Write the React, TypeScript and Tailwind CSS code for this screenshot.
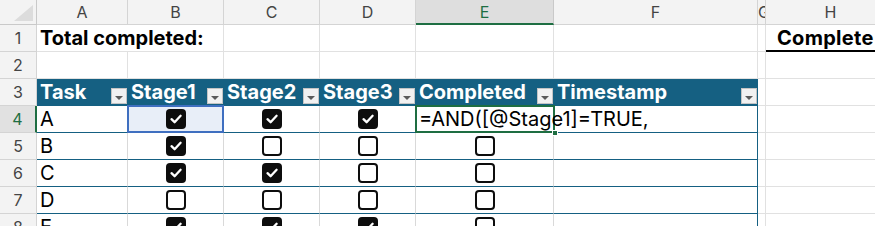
import React from "react";

const W = [
  "w-[37px]",
  "w-[91px]",
  "w-[96px]",
  "w-[96px]",
  "w-[96px]",
  "w-[138px]",
  "w-[204px]",
  "w-[8px]",
  "w-[130px]",
];

const FONT = { fontFamily: "Inter, 'Liberation Sans', sans-serif" };

function Check({ on }: { on: boolean }) {
  return on ? (
    <div className="w-[20px] h-[20px] rounded-[4px] bg-[#0d0d0d] flex items-center justify-center">
      <svg width="14" height="14" viewBox="0 0 14 14">
        <path d="M2.5 7.2 L5.6 10.2 L11.6 3.8" fill="none" stroke="#fff" strokeWidth="2.3" strokeLinecap="round" strokeLinejoin="round" />
      </svg>
    </div>
  ) : (
    <div className="w-[20px] h-[20px] rounded-[4px] border-[2.5px] border-[#0d0d0d] bg-white" />
  );
}

function FilterBtn() {
  return (
    <div className="self-end mb-[1px] w-[16px] h-[16px] shrink-0 bg-[#f1f1f1] border border-[#c4c4c4] flex items-end justify-center pb-[3px]">
      <div className="w-0 h-0 border-l-[4px] border-r-[4px] border-t-[4px] border-l-transparent border-r-transparent border-t-[#5a5a5a]" />
    </div>
  );
}

function ColHeader() {
  const letters = ["A", "B", "C", "D", "E", "F", "G", "H"];
  return (
    <div className="flex h-[25px]">
      <div className={`${W[0]} h-[25px] shrink-0 bg-[#f3f3f3] border-r border-b border-[#c9c9c9] relative`}>
        <svg className="absolute left-[14px] top-[5px]" width="19" height="16" viewBox="0 0 19 16">
          <polygon points="19,0 19,16 0,16" fill="#dcdcdc" />
        </svg>
      </div>
      {letters.map((l, i) => {
        const sel = l === "E";
        return (
          <div
            key={l}
            className={`${W[i + 1]} h-[25px] shrink-0 flex items-center overflow-hidden text-[16px] ${
              l === "G" ? "justify-start pl-[0px]" : "justify-center"
            } ${
              sel
                ? "bg-[#dedede] text-[#1e6e42] border-r border-r-[#c9c9c9] border-b-2 border-b-[#1e6e42]"
                : "bg-[#f3f3f3] text-[#444] border-r border-b border-[#d4d4d4]"
            }`}
          >
            {l}
          </div>
        );
      })}
    </div>
  );
}

function RowHead({ n, sel }: { n: number; sel?: boolean }) {
  return (
    <div
      className={`${W[0]} h-[27px] shrink-0 flex items-center justify-center text-[16px] ${
        sel
          ? "bg-[#e1e1e1] text-[#1e6e42] border-r-2 border-r-[#1e6e42] border-b border-b-[#d4d4d4]"
          : "bg-[#f3f3f3] text-[#444] border-r border-b border-[#d4d4d4]"
      }`}
    >
      {n}
    </div>
  );
}

function Grid({ w, children, cls = "" }: { w: string; children?: React.ReactNode; cls?: string }) {
  return (
    <div className={`${w} h-[27px] shrink-0 border-r border-b border-[#e1e1e1] ${cls}`}>{children}</div>
  );
}

const data: [string, boolean, boolean, boolean, boolean | null][] = [
  ["A", true, true, true, null],
  ["B", true, false, false, false],
  ["C", true, true, false, false],
  ["D", false, false, false, false],
  ["E", true, true, true, false],
];

export default function App() {
  return (
    <div className="w-[875px] h-[226px] overflow-hidden bg-white text-black" style={FONT}>
      <ColHeader />
      {/* Row 1 */}
      <div className="flex">
        <RowHead n={1} />
        <div className={`${W[1]} h-[27px] shrink-0 border-b border-[#e1e1e1] flex items-center pl-[3px] font-bold text-[20px] whitespace-nowrap relative z-10`}>
          Total completed:
        </div>
        <Grid w={W[2]} />
        <Grid w={W[3]} />
        <Grid w={W[4]} />
        <Grid w={W[5]} />
        <Grid w={W[6]} />
        <Grid w={W[7]} />
        <div className={`${W[8]} h-[27px] shrink-0 border-b-2 border-black flex items-center pl-[11px] font-bold text-[20px] tracking-[0.3px] whitespace-nowrap`}>
          Complete
        </div>
      </div>
      {/* Row 2 */}
      <div className="flex">
        <RowHead n={2} />
        {W.slice(1).map((w, i) => (
          <Grid key={i} w={w} />
        ))}
      </div>
      {/* Row 3 table header */}
      <div className="flex">
        <RowHead n={3} />
        {["Task", "Stage1", "Stage2", "Stage3", "Completed", "Timestamp"].map((h, i) => (
          <div
            key={h}
            className={`${W[i + 1]} h-[27px] shrink-0 bg-[#156082] border-b border-r border-[#156082] flex items-center justify-between pl-[3px] text-white font-bold text-[20px] whitespace-nowrap`}
          >
            <span>{h}</span>
            <FilterBtn />
          </div>
        ))}
        <Grid w={W[7]} />
        <Grid w={W[8]} />
      </div>
      {/* Data rows */}
      {data.map((r, ri) => {
        const rowSel = ri === 0;
        return (
          <div key={ri} className="flex">
            <RowHead n={ri + 4} sel={rowSel} />
            <div className={`${W[1]} h-[27px] shrink-0 border-b border-b-[#156082] border-r border-r-[#d9d9d9] flex items-center pl-[3px] text-[20px]`}>
              {r[0]}
            </div>
            {[r[1], r[2], r[3]].map((c, ci) => (
              <div
                key={ci}
                className={`${W[ci + 2]} h-[27px] shrink-0 border-b border-b-[#156082] border-r border-r-[#d9d9d9] flex items-center justify-center relative ${
                  rowSel && ci === 0 ? "bg-[#e8eef8]" : ""
                }`}
              >
                <Check on={c} />
                {rowSel && ci === 0 && (
                  <div className="absolute -left-[1px] -top-[1px] -right-[1px] -bottom-[1px] border-2 border-[#3f6fc0] pointer-events-none" />
                )}
              </div>
            ))}
            {rowSel ? (
              <div className={`${W[5]} h-[27px] shrink-0 border-b border-b-[#156082] flex items-center pl-[3px] text-[20px] relative z-10 whitespace-nowrap`}>
                <span className="relative z-10">=AND([@Stage1]=TRUE,</span>
                <div className="absolute -left-[1px] -top-[1px] -right-[1px] -bottom-[1px] border-2 border-[#1e6e42]" />
                <div className="absolute -right-[4px] -bottom-[4px] w-[6px] h-[6px] bg-[#1e6e42] border border-white" />
              </div>
            ) : (
              <div className={`${W[5]} h-[27px] shrink-0 border-b border-b-[#156082] border-r border-r-[#d9d9d9] flex items-center justify-center`}>
                <Check on={!!r[4]} />
              </div>
            )}
            <div className={`${W[6]} h-[27px] shrink-0 border-b border-b-[#156082] border-r border-r-[#156082]`} />
            <Grid w={W[7]} />
            <Grid w={W[8]} />
          </div>
        );
      })}
    </div>
  );
}
